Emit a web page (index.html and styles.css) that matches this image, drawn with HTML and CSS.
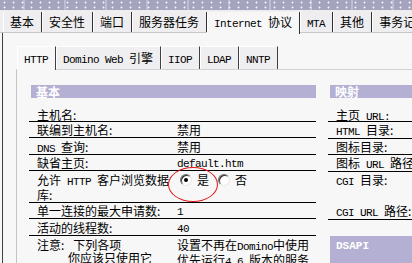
FILE: index.html
```html
<!DOCTYPE html>
<html lang="zh-CN">
<head>
  <meta charset="UTF-8" />
  <title>Internet 协议</title>
  <link rel="stylesheet" href="styles.css">
</head>
<body>

  <!-- Banner + main tabs -->
  <div class="banner"></div>
  <div class="tabs">
    <div class="tab">基本</div>
    <div class="tab">安全性</div>
    <div class="tab">端口</div>
    <div class="tab">服务器任务</div>
    <div class="tab active"><span class="en">Internet </span>协议</div>
    <div class="tab"><span class="en">MTA</span></div>
    <div class="tab">其他</div>
    <div class="tab">事务记录</div>
  </div>

  <div class="page">
    <!-- Sub tabs -->
    <div class="subtabs">
      <div class="subtab active"><span class="en">HTTP</span></div>
      <div class="subtab"><span class="en">Domino Web </span>引擎</div>
      <div class="subtab"><span class="en">IIOP</span></div>
      <div class="subtab"><span class="en">LDAP</span></div>
      <div class="subtab"><span class="en">NNTP</span></div>
    </div>

    <div class="panel">
      <div class="grid">
        <div class="head">基本</div>
        <div class="head">映射</div>

        <div class="row first"><span class="label">主机名:</span></div>
        <div class="row side first">主页<span class="en"> URL:</span></div>

        <div class="row"><span class="label">联编到主机名:</span><span class="value">禁用</span></div>
        <div class="row side"><span class="en">HTML </span>目录:</div>

        <div class="row"><span class="label"><span class="en">DNS </span>查询:</span><span class="value">禁用</span></div>
        <div class="row side">图标目录:</div>

        <div class="row"><span class="label">缺省主页:</span><span class="value en">default.htm</span></div>
        <div class="row side">图标<span class="en"> URL </span>路径:</div>

        <div class="row tall">
          <span class="label">允许<span class="en"> HTTP </span>客户浏览数据库:</span>
          <span class="value choice">
            <span class="radio on"></span><span class="opt">是</span>
            <span class="radio"></span><span class="opt">否</span>
            <span class="mark"></span>
          </span>
        </div>
        <div class="row side noline"><span class="en">CGI </span>目录:</div>

        <div class="row"><span class="label">单一连接的最大申请数:</span><span class="value en">1</span></div>
        <div class="row side"><span class="en">CGI URL </span>路径:</div>

        <div class="row"><span class="label">活动的线程数:</span><span class="value en">40</span></div>
        <div class="row side noline"></div>

        <div class="row note noline">
          <div class="label">
            <div>注意:<span class="gap"></span>下列各项</div>
            <div class="indent">你应该只使用它</div>
          </div>
          <div class="value">
            <div>设置不再在<span class="en">Domino</span>中使用</div>
            <div>优先运行<span class="en">4.6.</span>版本的服务</div>
          </div>
        </div>
        <div class="head dsapi"><span class="en">DSAPI</span></div>
      </div>
    </div>
  </div>

</body>
</html>
```

FILE: styles.css
```css
/* -- Base -- */
* { box-sizing: border-box; margin: 0; padding: 0; }
body {
  width: 412px;
  height: 263px;
  overflow: hidden;
  background: #f7f7f7;
  color: #000;
  font-family: "Noto Sans CJK SC", sans-serif;
  font-size: 12px;
}
.en {
  font-family: "Liberation Mono", monospace;
  font-size: 11px;
  line-height: 1;
  letter-spacing: -0.6px;
}

/* -- Banner -- */
.banner {
  height: 10px;
  background-color: #a4a4be;
  background-image:
    radial-gradient(circle, #f2f2fa 0.7px, transparent 1.3px),
    repeating-linear-gradient(90deg, transparent 0 23px, #bdbdd4 23px 25px, transparent 25px 41px);
  background-size: 9px 5px, auto;
}

/* -- Main tabs -- */
.tabs {
  display: flex;
  align-items: flex-start;
  height: 23px;
  padding-left: 3px;
  background: #eeedef;
  border-bottom: 1px solid #c6c6c6;
  white-space: nowrap;
}
.tab {
  flex: none;
  margin-top: 2px;
  height: 20px;
  line-height: 20px;
  padding: 0 7px 0 6px;
  border-left: 1px solid #fff;
  border-right: 1px solid #303030;
}
.tab.active {
  height: 22px;
  background: #f7f7f7;
}

/* -- Page -- */
.page {
  margin-left: 2px;
  height: 230px;
  border-left: 1px solid #404040;
  padding: 13px 0 0 13px;
}

/* -- Sub tabs -- */
.subtabs {
  display: flex;
  align-items: flex-start;
  height: 24px;
  padding-left: 1px;
  border-bottom: 1px solid #d2d2d2;
  white-space: nowrap;
}
.subtab {
  flex: none;
  height: 23px;
  line-height: 22px;
  padding: 0 7px 0 6px;
  background: #efeef0;
  border-top: 1px solid #fff;
  border-left: 1px solid #fff;
  border-right: 1px solid #404040;
}
.subtab.active {
  height: 24px;
  background: #f7f7f7;
}

/* -- Panel / table -- */
.panel {
  height: 200px;
  border-left: 1px solid #c4c4c4;
  padding: 15px 0 0 12px;
}
.grid {
  display: grid;
  grid-template-columns: 287px 160px;
  column-gap: 12px;
}
.head {
  margin-left: 2px;
  height: 13px;
  line-height: 13px;
  padding-left: 5px;
  background: #b4b0d4;
  color: #fff;
  font-weight: bold;
}
.row {
  display: flex;
  height: 16px;
  line-height: 15px;
  padding-left: 8px;
  border-bottom: 1px solid #000;
  white-space: nowrap;
}
.row.side { display: block; height: auto; }
.row.first { height: 24px; padding-top: 9px; }
.row.noline { border-bottom: none; }
.row.tall { height: 31px; }
.row.tall .label { line-height: 14px; padding-top: 1px; }
.label {
  flex: none;
  width: 140px;
  white-space: normal;
}
.value { position: relative; }
.value.en { line-height: 15px; padding-top: 2px; }

/* -- Radio choice -- */
.choice {
  display: flex;
  align-items: flex-start;
  padding-top: 1px;
}
.radio {
  display: inline-flex;
  align-items: center;
  justify-content: center;
  width: 12px;
  height: 12px;
  margin: 1px 0 0 3px;
  border-radius: 50%;
  border: 1px solid;
  border-color: #6c6c6c #e8e8e8 #e8e8e8 #6c6c6c;
  background: #fff;
  box-shadow: inset 1px 1px 0 #303030;
}
.radio.on::after {
  content: "";
  width: 4px;
  height: 4px;
  border-radius: 50%;
  background: #000;
}
.opt { margin: 0 6px 0 5px; line-height: 14px; }
.mark {
  position: absolute;
  left: -9px;
  top: -5px;
  width: 50px;
  height: 35px;
  border: 1px solid #e01818;
  border-radius: 50%;
}

/* -- Note row -- */
.row.note { height: auto; padding-top: 2px; line-height: 13px; }
.gap { display: inline-block; width: 9px; }
.indent { padding-left: 31px; }
.dsapi {
  height: 40px;
  padding: 2px 0 0 6px;
  line-height: 12px;
}
.dsapi .en { font-weight: bold; letter-spacing: 0; }
```
